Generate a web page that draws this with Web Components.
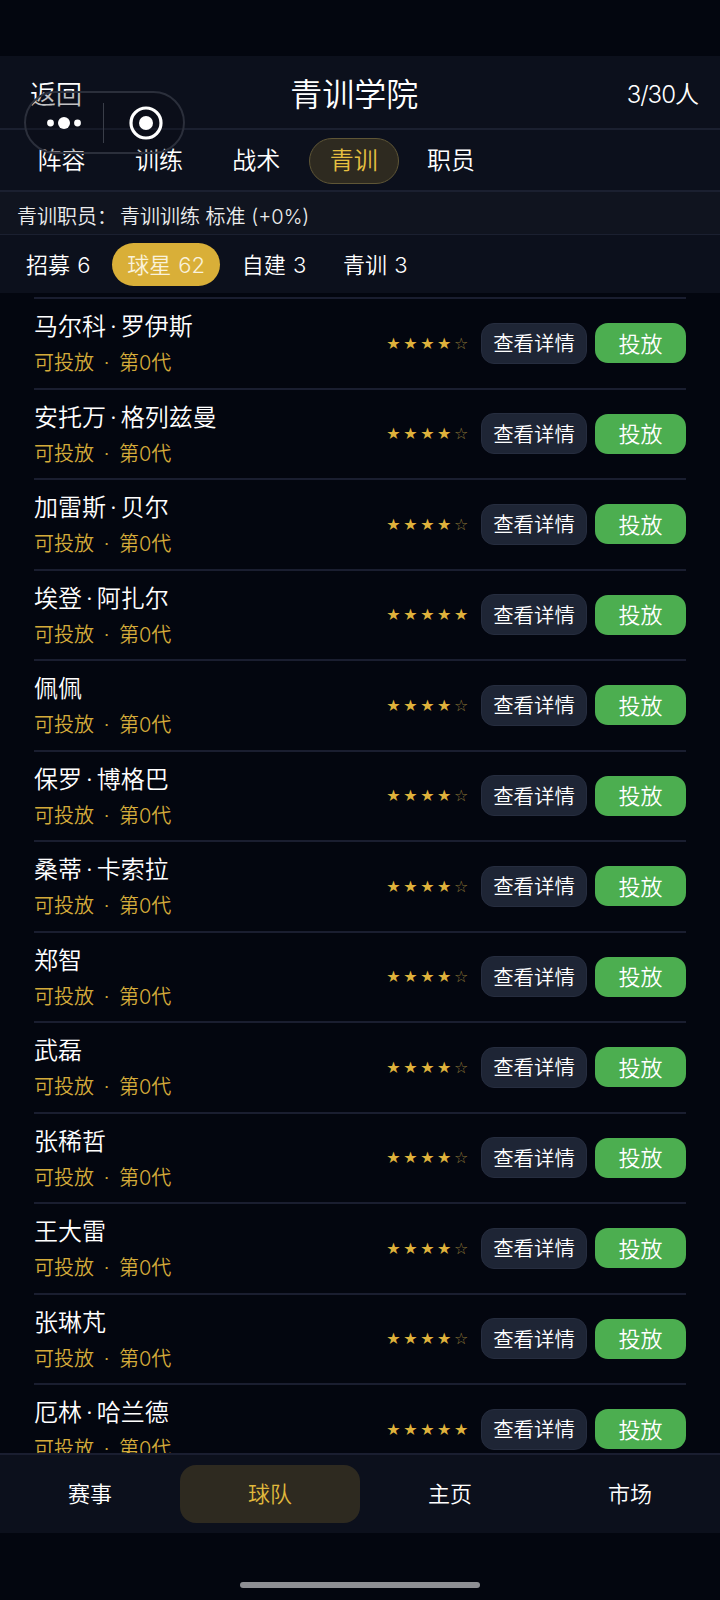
<!DOCTYPE html>
<html lang="zh">
<head>
<meta charset="utf-8">
<title>青训学院</title>
<style>
html,body{margin:0;height:100%;background:#03060f}
body{font-family:Inter,"Noto Sans CJK SC",sans-serif;color:#fff;font-weight:350}
</style>
</head>
<body>
<academy-page></academy-page>
<script>
// top bar with the back link, title and squad count
class TopBar extends HTMLElement {
    constructor() {
        super();
        this.attachShadow({mode: 'open'}).innerHTML =
            '<style>:host{display:flex;justify-content:space-between;align-items:center;height:72px;' +
            'padding:0 22px 0 30px;background:#0c101c;border-bottom:2px solid #1b2030}' +
            '.back{font-size:26px}.title{font-size:32px}.count{font-size:24px;letter-spacing:-1px}</style>' +
            '<span class=back><slot name=back></slot></span><span class=title><slot name=title></slot></span>' +
            '<span class=count><slot name=count></slot></span>';
    }
}

// the round capsule that floats over the header
class MenuCapsule extends HTMLElement {
    constructor() {
        super();
        this.attachShadow({mode: 'open'}).innerHTML =
            '<style>:host{position:absolute;left:24px;top:91px;width:161px;height:63px;box-sizing:border-box;' +
            'display:flex;align-items:center;border:2px solid #2b2f3b;border-radius:32px;background:rgba(6,8,14,.25)}' +
            '.side{flex:1;display:flex;justify-content:center;align-items:center}' +
            '.side.left{padding-right:2px}.side.right{padding-left:4px}' +
            '.rule{width:1px;height:40px;background:#3a3e49}</style>' +
            '<div class="side left"><svg width="36" height="14" viewBox="0 0 36 14"><circle cx="4.5" cy="7" r="3.4" fill="#fff"/>' +
            '<circle cx="18" cy="7" r="6" fill="#fff"/><circle cx="31.5" cy="7" r="3.4" fill="#fff"/></svg></div>' +
            '<div class=rule></div>' +
            '<div class="side right"><svg width="34" height="34" viewBox="0 0 34 34"><circle cx="17" cy="17" r="15" fill="none" stroke="#fff" stroke-width="3.2"/>' +
            '<circle cx="17" cy="17" r="7" fill="#fff"/></svg></div>';
    }
}

class TabItem extends HTMLElement {
    constructor() {
        super();
        this.attachShadow({mode: 'open'}).innerHTML =
            '<style>:host{display:block;box-sizing:border-box;width:90px;height:46px;border-radius:23px;' +
            'border:1px solid transparent;font-size:24px;line-height:44px;text-align:center}' +
            ':host([active]){background:#2e2a20;border-color:#5f5636;color:#e6c040}</style><slot></slot>';
    }
}

class TabBar extends HTMLElement {
    constructor() {
        super();
        this.attachShadow({mode: 'open'}).innerHTML =
            '<style>:host{display:flex;align-items:center;gap:7.4px;box-sizing:border-box;height:60px;padding:2px 16.5px 0;' +
            'background:#0c101c}</style><slot></slot>';
    }
}

class StaffLine extends HTMLElement {
    constructor() {
        super();
        this.attachShadow({mode: 'open'}).innerHTML =
            '<style>:host{display:flex;align-items:center;box-sizing:border-box;height:45px;padding:4px 17px 0;background:#10141f;' +
            'border-top:2px solid #1b2030;border-bottom:1px solid #1b2030;font-size:20px;color:#eceded;white-space:pre}' +
            '.label{margin-right:3px}</style><span class=label><slot name=label></slot></span><slot></slot>';
    }
}

class FilterChip extends HTMLElement {
    constructor() {
        super();
        this.attachShadow({mode: 'open'}).innerHTML =
            '<style>:host{display:block;height:43px;line-height:45px;padding:0 15px;border-radius:22px;' +
            'font-size:22px;white-space:nowrap;word-spacing:1px}:host([active]){background:#d9af38;color:#f9f2dc}</style><slot></slot>';
    }
}

class FilterBar extends HTMLElement {
    constructor() {
        super();
        this.attachShadow({mode: 'open'}).innerHTML =
            '<style>:host{display:flex;align-items:center;gap:6.7px;box-sizing:border-box;height:58px;padding:0 11px;background:#0c101c}</style><slot></slot>';
    }
}

class PlayerRow extends HTMLElement {
    static get observedAttributes() {
        return Array.of('name', 'stars');
    }

    constructor() {
        super();
        this.attachShadow({mode: 'open'}).innerHTML =
            '<style>:host{display:flex;align-items:center;box-sizing:border-box;height:90.5px;flex:none;' +
            'border-top:2px solid #1a1e30}' +
            '.info{flex:1;min-width:0;padding-top:3px}.name{font-size:24px;line-height:34px;color:#fff}' +
            '.dot{padding:0 4px}' +
            '.state{font-size:20px;line-height:32px;margin-top:3px;color:#d4ab3a;white-space:pre}' +
            '.stars{font:16px "DejaVu Sans",sans-serif;letter-spacing:2.6px;color:#dfb23c;margin-right:10px}' +
            '.stars i{font-style:normal;color:#8a7436}' +
            'button{font:inherit;height:41px;border-radius:13px;color:#fff}' +
            '.more{width:106px;padding:0 0 2px;background:#1e2535;border:1px solid #262d3f;margin-right:8px;font-size:20.4px}' +
            '.drop{width:91px;padding:0 0 3px;background:#4cae50;border:0;height:40px;font-size:22px}</style>' +
            '<div class=info><div class=name></div><div class=state>可投放<span class=dot> · </span>第0代</div></div>' +
            '<span class=stars></span><button class=more>查看详情</button><button class=drop>投放</button>';
    }

    attributeChangedCallback(name, oldValue, newValue) {
        if (name === 'name') {
            this.shadowRoot.querySelector('.name').innerHTML = newValue.replace('·', '<span class=dot>·</span>');
        } else {
            const n = Number(newValue);
            this.shadowRoot.querySelector('.stars').innerHTML = '★'.repeat(n) + '<i>' + '☆'.repeat(5 - n) + '</i>';
        }
    }
}

class PlayerList extends HTMLElement {
    constructor() {
        super();
        this.attachShadow({mode: 'open'}).innerHTML =
            '<style>:host{display:flex;flex-direction:column;flex:1;min-height:0;overflow:hidden;' +
            'padding:4px 34px 0;background:#03060f}</style><slot></slot>';
    }
}

class NavItem extends HTMLElement {
    constructor() {
        super();
        this.attachShadow({mode: 'open'}).innerHTML =
            '<style>:host{display:block;height:58px;line-height:58px;text-align:center;font-size:22px;border-radius:16px}' +
            ':host([active]){background:#2e2a20;color:#e0b93c}</style><slot></slot>';
    }
}

class BottomNav extends HTMLElement {
    constructor() {
        super();
        this.attachShadow({mode: 'open'}).innerHTML =
            '<style>:host{display:grid;grid-template-columns:repeat(4,1fr);align-items:center;height:78px;' +
            'background:#0c101c;border-top:2px solid #1a1e30}</style><slot></slot>';
    }
}

class AcademyPage extends HTMLElement {
    constructor() {
        super();
        const players = [
            ['马尔科·罗伊斯', 4], ['安托万·格列兹曼', 4], ['加雷斯·贝尔', 4], ['埃登·阿扎尔', 5],
            ['佩佩', 4], ['保罗·博格巴', 4], ['桑蒂·卡索拉', 4], ['郑智', 4], ['武磊', 4],
            ['张稀哲', 4], ['王大雷', 4], ['张琳芃', 4], ['厄林·哈兰德', 5],
        ];
        this.attachShadow({mode: 'open'}).innerHTML =
            '<style>:host{display:flex;flex-direction:column;height:1600px;padding-top:56px;box-sizing:border-box;position:relative}' +
            '.foot{height:67px;flex:none;display:flex;justify-content:center}' +
            '.foot div{width:240px;height:6px;margin-top:49px;border-radius:3px;background:#8e8f94}</style>' +
            '<top-bar><span slot=back>返回</span><span slot=title>青训学院</span><span slot=count>3/30人</span></top-bar>' +
            '<menu-capsule></menu-capsule>' +
            '<tab-bar><tab-item>阵容</tab-item><tab-item>训练</tab-item><tab-item>战术</tab-item>' +
            '<tab-item active>青训</tab-item><tab-item>职员</tab-item></tab-bar>' +
            '<staff-line><span slot=label>青训职员：</span>青训训练 标准 (+0%)</staff-line>' +
            '<filter-bar><filter-chip>招募 6</filter-chip><filter-chip active>球星 62</filter-chip>' +
            '<filter-chip>自建 3</filter-chip><filter-chip>青训 3</filter-chip></filter-bar>' +
            '<player-list>' + players.map(p => '<player-row name="' + p[0] + '" stars="' + p[1] + '"></player-row>').join('') + '</player-list>' +
            '<bottom-nav><nav-item>赛事</nav-item><nav-item active>球队</nav-item><nav-item>主页</nav-item><nav-item>市场</nav-item></bottom-nav>' +
            '<div class=foot><div></div></div>';
    }
}

customElements.define('top-bar', TopBar);
customElements.define('menu-capsule', MenuCapsule);
customElements.define('tab-item', TabItem);
customElements.define('tab-bar', TabBar);
customElements.define('staff-line', StaffLine);
customElements.define('filter-chip', FilterChip);
customElements.define('filter-bar', FilterBar);
customElements.define('player-row', PlayerRow);
customElements.define('player-list', PlayerList);
customElements.define('nav-item', NavItem);
customElements.define('bottom-nav', BottomNav);
customElements.define('academy-page', AcademyPage);
</script>
</body>
</html>
